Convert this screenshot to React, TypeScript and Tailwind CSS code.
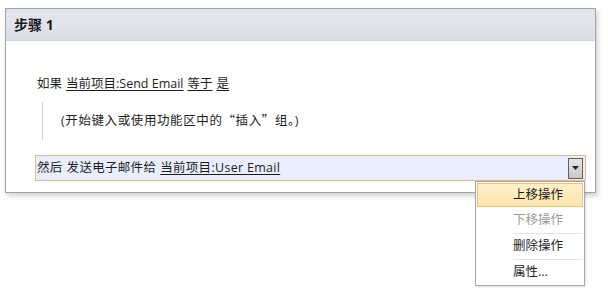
import { useState } from "react";

const font = { fontFamily: '"Segoe UI", "Open Sans", "Noto Sans CJK SC", sans-serif' };

function App() {
  const [active, setActive] = useState(0);
  const items = [
    { label: "上移操作", disabled: false },
    { label: "下移操作", disabled: true },
    { label: "删除操作", disabled: false },
    { label: "属性...", disabled: false },
  ];

  return (
    <div className="h-[295px] w-[608px] bg-white pl-[5px] pt-[8px] text-[12.5px] text-[#1e1e1e]" style={font}>
      <div className="relative w-[591px] border border-[#a3a3a3] bg-white shadow-[2px_3px_5px_rgba(0,0,0,0.18)]">
        <div className="flex h-[32px] items-center border-b border-[#cfd3da] bg-gradient-to-b from-[#e1e3ea] via-[#e3e4ee] to-[#d8dbe3] px-[8px]">
          <span className="text-[14px] font-bold text-[#1a1a1a]">步骤 1</span>
        </div>

        <div className="pb-[11px] pl-[29px] pr-[9px] pt-[34px]">
          <div className="flex items-center gap-[4px] pl-[2px] leading-[18px]">
            <span>如果</span>
            <span className="underline underline-offset-2">当前项目:Send Email</span>
            <span className="underline underline-offset-2">等于</span>
            <span className="underline underline-offset-2">是</span>
          </div>

          <div className="ml-[7px] mt-[9px] flex h-[38px] items-center border-l border-[#d0d0d0] pl-[18px]">
            <span className="tracking-[0.6px]">
              (开始键入或使用功能区中的
              <span className="font-['Noto_Sans_CJK_SC',sans-serif]">“插入”组。</span>)
            </span>
          </div>

          <div className="relative mt-[15px] flex h-[26px] items-center justify-between border border-[#e4b894] bg-[#e8eefb] pl-[1px] pr-[2px]">
            <div className="flex items-center gap-[4px] tracking-[0.3px]">
              <span>然后</span>
              <span>发送电子邮件给</span>
              <span className="underline underline-offset-2">当前项目:User Email</span>
            </div>
            <button className="flex h-[21px] w-[15px] items-center justify-center border border-[#6d5a4a] bg-gradient-to-b from-[#e6e6e6] to-[#c9c9c9]">
              <svg width="7" height="4" viewBox="0 0 7 4">
                <path d="M0 0h7L3.5 4z" fill="#222" />
              </svg>
            </button>

            <div className="absolute right-[0px] top-[25px] z-10 w-[110px] border border-[#a7a7a7] bg-white p-[1px] shadow-[1px_1px_2px_rgba(0,0,0,0.12)]">
              {items.map((item, i) => (
                <div key={item.label}>
                  <div
                    onMouseEnter={() => !item.disabled && setActive(i)}
                    className={
                      "flex h-[24px] items-center border pl-[35px] " +
                      (active === i
                        ? "border-[#e8c47f] bg-gradient-to-b from-[#fdefc7] to-[#fce6b0]"
                        : "border-transparent") +
                      (item.disabled ? " text-[#9a9a9a]" : "")
                    }
                  >
                    {item.label}
                  </div>
                  {i > 0 && i < items.length - 1 && <div className="ml-[36px] mt-[1px] h-px bg-[#e4e4e4]" />}
                  {i === 0 && <div className="h-[1px]" />}
                </div>
              ))}
            </div>
          </div>
        </div>
      </div>
    </div>
  );
}

export default App;
